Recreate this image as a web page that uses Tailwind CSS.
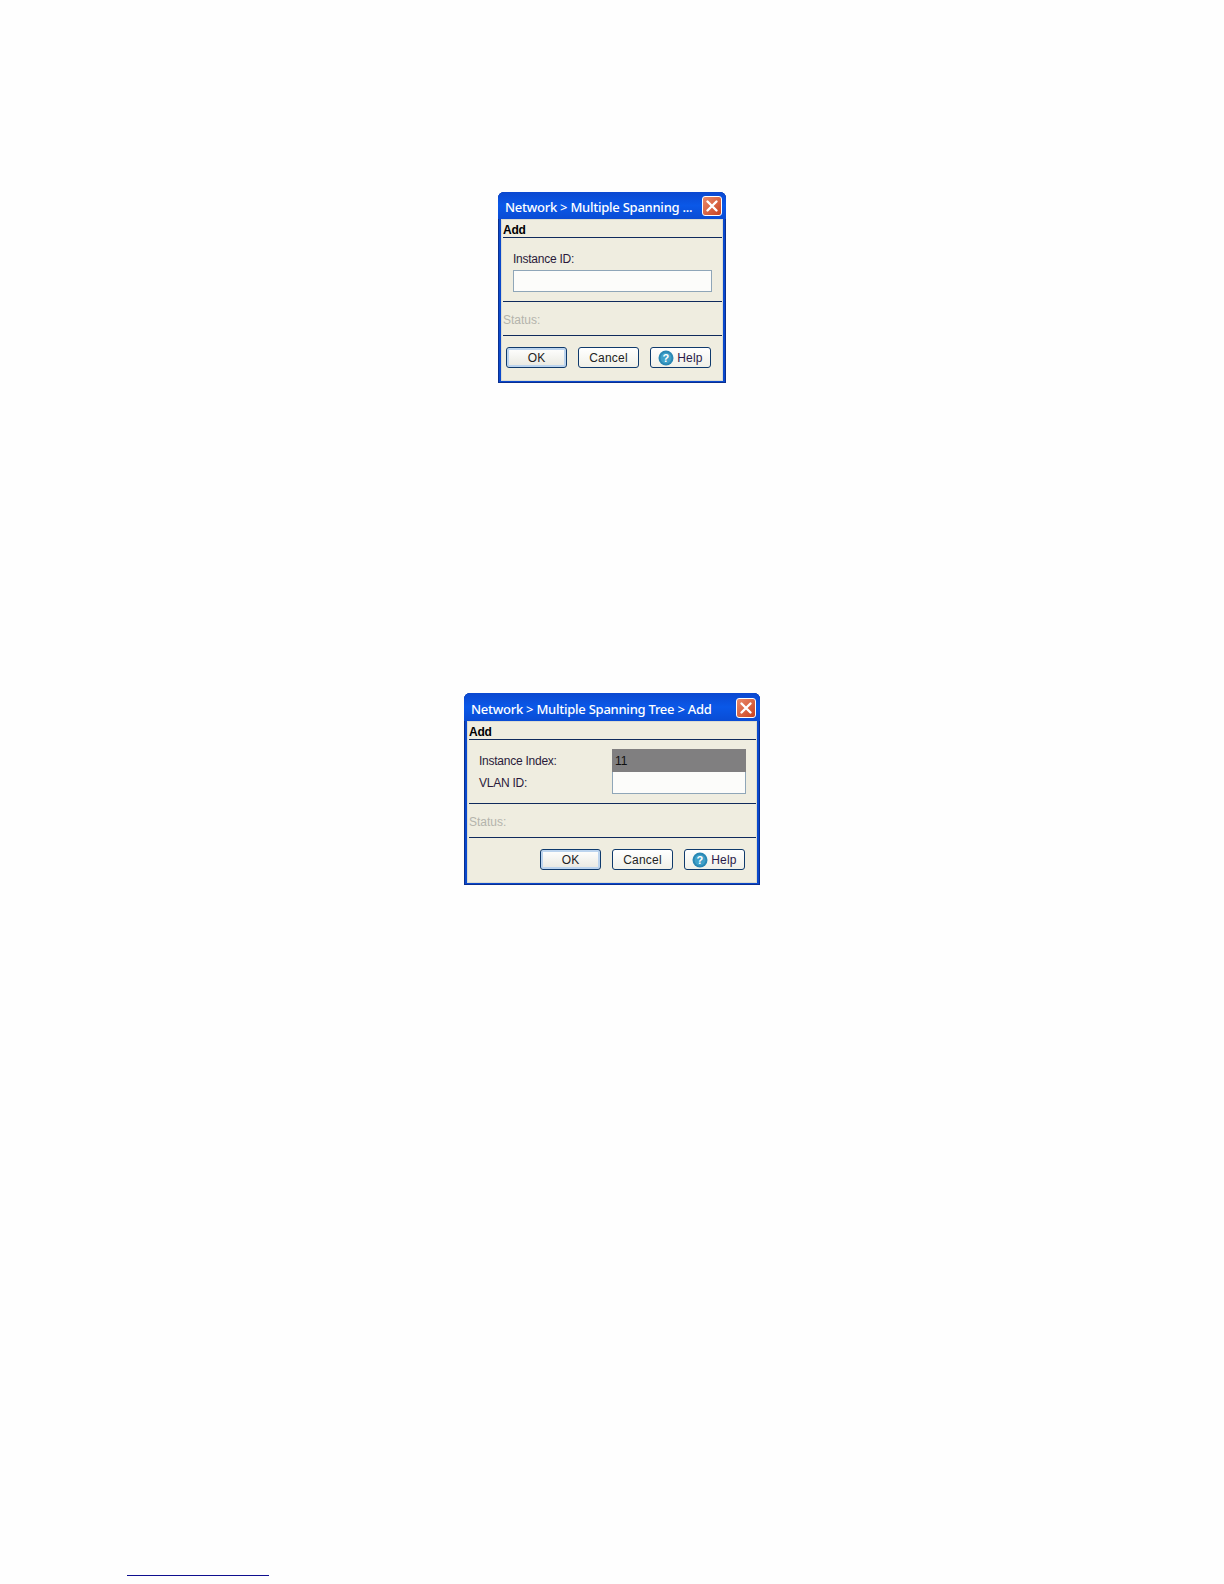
<!DOCTYPE html>
<html lang="en">
<head>
  <meta charset="UTF-8">
  <title>Multiple Spanning Tree</title>
  <script src="https://cdn.jsdelivr.net/npm/@tailwindcss/browser@4"></script>
</head>
<body class="bg-[#fefefe] font-['Liberation_Sans',sans-serif]">
  <div class="w-[1224px] h-[1584px] pt-[192px] overflow-hidden">

    <!-- First dialog -->
    <div class="ml-[498px] w-[228px] h-[191px] flex flex-col rounded-t-[6px] bg-[#0a48cc] shadow-[inset_0_0_0_1px_#0a2f90]">
      <div class="h-[27px] shrink-0 flex items-center justify-between pl-[7px] pr-[4px] pt-[4px] rounded-t-[6px] bg-gradient-to-b from-[#0b48d0] via-[#0a58e8] to-[#0a4cd4]">
        <span class="font-['Noto_Sans',sans-serif] font-medium text-[13px] tracking-[-0.25px] text-white whitespace-nowrap">Network &gt; Multiple Spanning ...</span>
        <div class="w-[20px] h-[20px] shrink-0 -mt-[3px] rounded-[3px] border border-white bg-gradient-to-br from-[#ea8a6a] to-[#c9401c] flex items-center justify-center">
          <svg width="14" height="14" viewBox="0 0 14 14"><path d="M2.5 2.5 L11.5 11.5 M11.5 2.5 L2.5 11.5" stroke="#fff" stroke-width="2.4" stroke-linecap="round"/></svg>
        </div>
      </div>
      <div class="flex-1 mx-[3px] mb-[2px] pl-[1px] border border-[#dcdcd0] bg-[#efede0] flex flex-col text-[12px] text-[#1a1a1a]">
        <div class="h-[18px] shrink-0 border-b border-[#0f2a5c] font-bold tracking-[-0.2px] text-black leading-[20px]">Add</div>
        <div class="h-[64px] shrink-0 border-b border-[#0f2a5c] pl-[10px] pt-[14px]">
          <p class="leading-[14px] tracking-[-0.25px] text-[#2a1a3a]">Instance ID:</p>
          <div class="mt-[4px] w-[199px] h-[22px] border border-[#8fa6b8] bg-[#fcfcfa]"></div>
        </div>
        <div class="h-[34px] shrink-0 border-b border-[#0f2a5c] pt-[2px] flex items-center text-[#b4b4ac]">Status:</div>
        <div class="flex-1 flex items-start gap-[11px] pl-[3px] pt-[11px]">
          <button class="w-[61px] h-[21px] pt-[1px] rounded-[3px] border border-[#0f3a6c] bg-gradient-to-b from-white to-[#e8e8e0] shadow-[inset_0_0_0_2px_#bcd4ee] text-[12px] tracking-[0.2px] text-[#222]">OK</button>
          <button class="w-[61px] h-[21px] pt-[1px] rounded-[3px] border border-[#0f3a6c] bg-gradient-to-b from-white to-[#f0f0e8] text-[12px] tracking-[0.2px] text-[#222]">Cancel</button>
          <button class="w-[61px] h-[21px] rounded-[3px] border border-[#0f3a6c] bg-gradient-to-b from-white to-[#f0f0e8] flex items-center justify-center gap-[3px] text-[12px] tracking-[0.2px] text-[#2a1a4a]">
            <svg width="16" height="16" viewBox="0 0 16 16"><circle cx="8" cy="8" r="7.5" fill="#2a88b4"/><circle cx="8" cy="8" r="5.5" fill="#3fa0c8"/><text x="8" y="12" text-anchor="middle" font-family="Liberation Sans" font-weight="bold" font-size="11" fill="#fff">?</text></svg>
            <span class="pt-[1px]">Help</span>
          </button>
        </div>
      </div>
    </div>

    <!-- Second dialog -->
    <div class="ml-[464px] mt-[310px] w-[296px] h-[192px] flex flex-col rounded-t-[6px] bg-[#0a48cc] shadow-[inset_0_0_0_1px_#0a2f90]">
      <div class="h-[28px] shrink-0 flex items-center justify-between pl-[7px] pr-[4px] pt-[5px] rounded-t-[6px] bg-gradient-to-b from-[#0b48d0] via-[#0a58e8] to-[#0a4cd4]">
        <span class="font-['Noto_Sans',sans-serif] font-medium text-[13px] tracking-[-0.25px] text-white whitespace-nowrap">Network &gt; Multiple Spanning Tree &gt; Add</span>
        <div class="w-[20px] h-[20px] shrink-0 -mt-[4px] rounded-[3px] border border-white bg-gradient-to-br from-[#ea8a6a] to-[#c9401c] flex items-center justify-center">
          <svg width="14" height="14" viewBox="0 0 14 14"><path d="M2.5 2.5 L11.5 11.5 M11.5 2.5 L2.5 11.5" stroke="#fff" stroke-width="2.4" stroke-linecap="round"/></svg>
        </div>
      </div>
      <div class="flex-1 mx-[3px] mb-[2px] pl-[1px] border border-[#dcdcd0] bg-[#efede0] flex flex-col text-[12px] text-[#1a1a1a]">
        <div class="h-[18px] shrink-0 border-b border-[#0f2a5c] font-bold tracking-[-0.2px] text-black leading-[20px]">Add</div>
        <div class="h-[64px] shrink-0 border-b border-[#0f2a5c] pt-[9px] pl-[10px] flex">
          <div class="w-[133px] tracking-[-0.25px] text-[#2a1a3a]">
            <p class="h-[22px] leading-[24px]">Instance Index:</p>
            <p class="h-[22px] leading-[24px]">VLAN ID:</p>
          </div>
          <div class="w-[134px]">
            <div class="h-[23px] bg-[#807f80] pl-[3px] leading-[25px] text-[#111]">11</div>
            <div class="h-[22px] border border-[#8fa6b8] border-t-0 bg-[#fcfcfa]"></div>
          </div>
        </div>
        <div class="h-[34px] shrink-0 border-b border-[#0f2a5c] pt-[2px] flex items-center text-[#b4b4ac]">Status:</div>
        <div class="flex-1 flex items-start justify-end gap-[11px] pr-[11px] pt-[11px]">
          <button class="w-[61px] h-[21px] pt-[1px] rounded-[3px] border border-[#0f3a6c] bg-gradient-to-b from-white to-[#e8e8e0] shadow-[inset_0_0_0_2px_#bcd4ee] text-[12px] tracking-[0.2px] text-[#222]">OK</button>
          <button class="w-[61px] h-[21px] pt-[1px] rounded-[3px] border border-[#0f3a6c] bg-gradient-to-b from-white to-[#f0f0e8] text-[12px] tracking-[0.2px] text-[#222]">Cancel</button>
          <button class="w-[61px] h-[21px] rounded-[3px] border border-[#0f3a6c] bg-gradient-to-b from-white to-[#f0f0e8] flex items-center justify-center gap-[3px] text-[12px] tracking-[0.2px] text-[#2a1a4a]">
            <svg width="16" height="16" viewBox="0 0 16 16"><circle cx="8" cy="8" r="7.5" fill="#2a88b4"/><circle cx="8" cy="8" r="5.5" fill="#3fa0c8"/><text x="8" y="12" text-anchor="middle" font-family="Liberation Sans" font-weight="bold" font-size="11" fill="#fff">?</text></svg>
            <span class="pt-[1px]">Help</span>
          </button>
        </div>
      </div>
    </div>

    <!-- Footnote rule -->
    <div class="ml-[127px] mt-[690px] w-[142px] h-[1px] bg-[#0f0f8f]"></div>
  </div>
</body>
</html>
